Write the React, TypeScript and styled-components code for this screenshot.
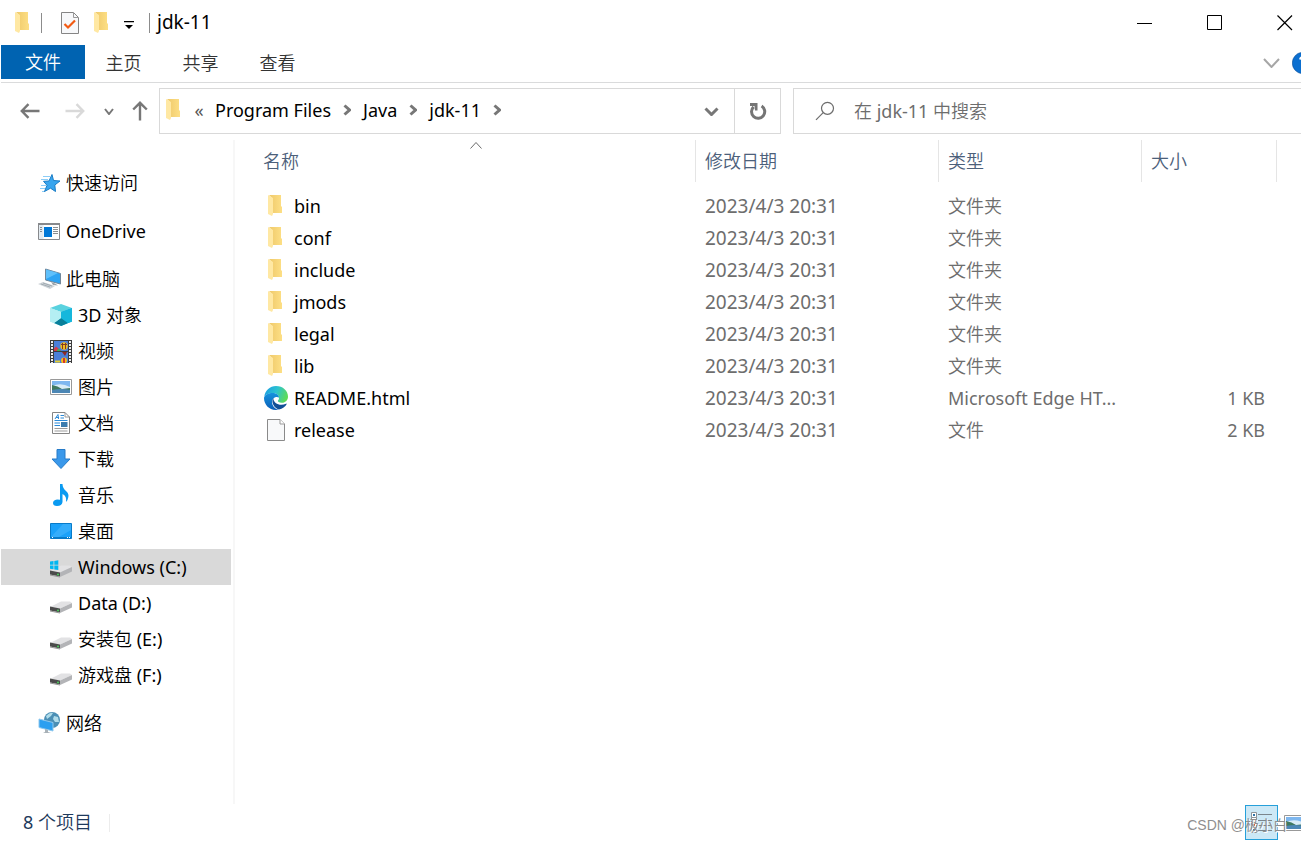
import React from "react";
import styled, { createGlobalStyle, css } from "styled-components";

const GlobalStyle = createGlobalStyle`
  * { box-sizing: border-box; }
  html, body { margin: 0; height: 100%; overflow: hidden; background: #fff; }
  #root { height: 100%; }
  body, button, input {
    font-family: "Noto Sans", "Noto Sans CJK SC DemiLight", "Noto Sans CJK SC", sans-serif;
    font-size: 18px;
    font-weight: 400;
    line-height: 24px;
    color: #000;
  }
  button { border: 0; padding: 0; background: none; cursor: default; }
  svg { display: block; flex: none; }
`;

const Window = styled.div`
  position: relative;
  display: flex;
  flex-direction: column;
  height: 100vh;
  padding-left: 1px;
  overflow: hidden;
`;

const TitleBar = styled.header`
  display: flex;
  align-items: center;
  height: 45px;
  flex: none;
`;

const QuickTools = styled.div`
  display: flex;
  align-items: center;
  padding-left: 14px;
`;

const ToolButton = styled.button<{ $width: number }>`
  display: flex;
  align-items: center;
  width: ${(p) => p.$width}px;
  height: 24px;
`;

const ToolRule = styled.span<{ $gap: number }>`
  width: 1px;
  height: 20px;
  margin-right: ${(p) => p.$gap}px;
  background: #8c8c8c;
`;

const Title = styled.h1`
  margin: 0;
  padding-bottom: 2px;
  font-size: 19px;
  font-weight: inherit;
  line-height: 24px;
`;

const WindowButtons = styled.div`
  display: flex;
  margin-left: auto;
`;

const WindowButton = styled.button<{ $edge?: boolean }>`
  display: flex;
  align-items: center;
  height: 45px;
  width: ${(p) => (p.$edge ? 52 : 70)}px;
  padding-left: 28px;
`;

const Ribbon = styled.nav`
  display: flex;
  align-items: center;
  height: 38px;
  flex: none;
  padding-bottom: 3px;
  border-bottom: 1px solid #dadbdc;
`;

const RibbonTab = styled.button<{ $primary?: boolean }>`
  height: 34px;
  width: ${(p) => (p.$primary ? 84 : 77)}px;
  padding-top: ${(p) => (p.$primary ? 0 : 2)}px;
  color: ${(p) => (p.$primary ? "#fff" : "#333")};
  background: ${(p) => (p.$primary ? "#0063b1" : "none")};
`;

const RibbonTools = styled.div`
  display: flex;
  align-items: center;
  gap: 12px;
  width: 38px;
  padding-top: 2px;
  margin-left: auto;
  overflow: hidden;
`;

const NavigationBar = styled.div`
  display: flex;
  height: 57px;
  flex: none;
  padding: 5px 0 6px;
`;

const HistoryButtons = styled.div`
  display: flex;
  align-items: center;
  width: 158px;
  padding-left: 18px;
`;

const AddressBox = styled.div`
  display: flex;
  flex: 620 1 0;
  min-width: 0;
  border: 1px solid #d9d9d9;
`;

const Crumbs = styled.ol`
  display: flex;
  flex: 1;
  align-items: center;
  margin: 0;
  padding: 0 0 2px 6px;
  list-style: none;
  white-space: nowrap;
`;

const Crumb = styled.li`
  display: flex;
  align-items: center;
  margin-right: 12px;
  gap: 12px;
`;

const Overflow = styled.button`
  width: 20px;
  margin: 0 6px 0 7px;
  color: #555;
  line-height: 20px;
`;

const AddressButton = styled.button<{ $divided?: boolean }>`
  display: flex;
  align-items: center;
  justify-content: center;
  width: 46px;
  ${(p) => p.$divided && css`border-left: 1px solid #d9d9d9;`}
`;

const SearchBox = styled.label`
  display: flex;
  align-items: center;
  flex: 486 1 0;
  min-width: 0;
  margin-left: 12px;
  padding-left: 21px;
  gap: 19px;
  border: 1px solid #d9d9d9;
  border-right: 0;
`;

const SearchInput = styled.input`
  flex: 1;
  min-width: 0;
  padding: 0;
  border: 0;
  outline: 0;
  &::placeholder { color: #6d6d6d; opacity: 1; }
`;

const Content = styled.div`
  display: flex;
  flex: 1;
  min-height: 0;
`;

const Sidebar = styled.nav`
  width: 234px;
  flex: none;
  padding: 25px 2px 0 0;
  border-right: 2px solid #f7f7f7;
`;

const TreeGroup = styled.ul`
  margin: 0 0 12px;
  padding: 0;
  list-style: none;
`;

const TreeItem = styled.a<{ $child?: boolean; $selected?: boolean }>`
  display: flex;
  align-items: center;
  gap: ${(p) => (p.$child ? 6 : 4)}px;
  height: 36px;
  padding-left: ${(p) => (p.$child ? 49 : 37)}px;
  color: #000;
  text-decoration: none;
  white-space: nowrap;
  background: ${(p) => (p.$selected ? "#d9d9d9" : "none")};
`;

const FilePane = styled.main`
  flex: 1;
  min-width: 0;
  padding-right: 24px;
`;

const FileTable = styled.table`
  width: 100%;
  table-layout: fixed;
  border-collapse: separate;
  border-spacing: 0;
`;

const Column = styled.col<{ $width?: number }>`
  width: ${(p) => (p.$width ? p.$width + "px" : "auto")};
`;

const HeadCell = styled.th<{ $name?: boolean }>`
  position: relative;
  height: 42px;
  padding: 0 0 0 ${(p) => (p.$name ? 28 : 9)}px;
  border-right: 1px solid #e5e5e5;
  color: #4c607a;
  font-weight: inherit;
  text-align: left;
`;

const SortMark = styled.span`
  position: absolute;
  top: 2px;
  left: 51%;
`;

const Body = styled.tbody`
  &::before { content: ""; display: block; height: 8px; }
`;

const Cell = styled.td<{ $end?: boolean }>`
  height: 32px;
  padding: 0 ${(p) => (p.$end ? 12 : 0)}px 0 9px;
  color: #6d6d6d;
  text-align: ${(p) => (p.$end ? "right" : "left")};
  white-space: nowrap;
  overflow: hidden;
`;

const DateCell = styled(Cell)`
  font-size: 19px;
`;

const NameCell = styled(Cell)`
  padding-left: 29px;
  color: #000;
`;

const FileName = styled.span`
  display: flex;
  align-items: center;
  gap: 6px;
`;

const IconSlot = styled.span<{ $width: number }>`
  display: flex;
  justify-content: center;
  width: ${(p) => p.$width}px;
  flex: none;
`;

const StatusBar = styled.footer`
  display: flex;
  align-items: center;
  height: 37px;
  flex: none;
  padding-left: 22px;
  color: #1e395b;
`;

const ItemCount = styled.span`
  padding-bottom: 2px;
`;

const StatusRule = styled.span`
  width: 1px;
  height: 18px;
  margin-left: 17px;
  background: #ececec;
`;

const ViewButtons = styled.div`
  display: flex;
  align-items: center;
  gap: 6px;
  width: 56px;
  margin-left: auto;
  overflow: hidden;
`;

const ViewButton = styled.button<{ $active?: boolean }>`
  display: flex;
  align-items: center;
  justify-content: center;
  flex: none;
  ${(p) => p.$active && css`
    width: 33px;
    height: 35px;
    border: 1px solid #26a0da;
    background: #cce8f6;
  `}
`;

const Credit = styled.span`
  position: absolute;
  right: 14px;
  bottom: 6px;
  color: #8f8f8f;
  font-family: "Liberation Sans", "Noto Sans CJK SC", sans-serif;
  font-size: 14px;
  line-height: 20px;
  text-shadow: 1px 1px 0 #fff;
  pointer-events: none;
`;

const Folder = () => (
  <svg width="16" height="22" viewBox="0 0 16 22">
    <defs>
      <linearGradient id="folderBack" x1="0" y1="0" x2="1" y2="0">
        <stop offset="0" stopColor="#efc96a" />
        <stop offset="1" stopColor="#fddf85" />
      </linearGradient>
    </defs>
    <path d="M1 0H13V11L14 12V18H4V3Z" fill="url(#folderBack)" />
    <path d="M0 0L5 3V19L4 21L0 19Z" fill="#ffe8a3" />
  </svg>
);

const Checked = () => (
  <svg width="18" height="22" viewBox="0 0 18 22">
    <path d="M.5.5H12.5L17.5 5.5V21.5H.5Z" fill="#f7f8fa" stroke="#858585" />
    <path d="M12.5 1V5.5H17" fill="none" stroke="#999" />
    <path d="M3.500 12L7 15.500L14 8.500" fill="none" stroke="#f25a12" strokeWidth="2.2" />
  </svg>
);

const Caret = () => (
  <svg width="10" height="12" viewBox="0 0 10 12">
    <path d="M0 4H10V5.300H0ZM1 8H9L5 12Z" fill="#000" />
  </svg>
);

const Chevron = ({ dir = "down", width = 10, height = 6, color = "#6b6b6b", stroke = 2 }: {
  dir?: "down" | "up" | "right"; width?: number; height?: number; color?: string; stroke?: number;
}) => {
  const m = stroke / 2;
  const d =
    dir === "down" ? `M${m} ${m}L${width / 2} ${height - m}L${width - m} ${m}`
    : dir === "up" ? `M${m} ${height - m}L${width / 2} ${m}L${width - m} ${height - m}`
    : `M${m} ${m}L${width - m} ${height / 2}L${m} ${height - m}`;
  return (
    <svg width={width} height={height} viewBox={`0 0 ${width} ${height}`}>
      <path d={d} fill="none" stroke={color} strokeWidth={stroke} />
    </svg>
  );
};

const Arrow = ({ turn, color }: { turn: number; color: string }) => (
  <svg width="22" height="20" viewBox="0 0 22 20">
    <g transform={`rotate(${turn} 11 10)`} fill="none" stroke={color} strokeWidth="2.4">
      <path d="M2.5 10H20.500M9.500 3.200L2.800 10L9.500 16.800" />
    </g>
  </svg>
);

const Refresh = () => (
  <svg width="18" height="18" viewBox="0 0 18 18">
    <path d="M12.600 4A6.600 6.600 0 1 1 4.600 4.800" fill="none" stroke="#757575" strokeWidth="3" />
    <path d="M1 1H8.500V8.500H6L5.500 4H1Z" fill="#757575" />
  </svg>
);

const Magnifier = () => (
  <svg width="20" height="20" viewBox="0 0 20 20">
    <circle cx="12.5" cy="7.3" r="6" fill="none" stroke="#6d6d6d" strokeWidth="1.2" />
    <path d="M8.2 11.6L1 18.8" stroke="#6d6d6d" strokeWidth="1.2" />
  </svg>
);

const Help = () => (
  <svg width="22" height="22" viewBox="0 0 22 22">
    <circle cx="11" cy="11" r="10.7" fill="#0b6fd0" stroke="#0a4f9a" strokeWidth=".6" />
    <path d="M8 7.5Q8.5 5 11 5Q14 5 14 8Q14 10 11 12V14M11 16V18" fill="none" stroke="#fff" strokeWidth="2" />
  </svg>
);

const Star = () => (
  <svg width="24" height="22" viewBox="0 0 24 22">
    <path d="M5 4.500H12M3 7.500H10M3 13.500H8M2 16.500H7M4 19.500H7" stroke="#8ccdf7" />
    <path d="M14 2.500L15.500 8.500L22 9L16.800 13L17.500 19.500L12.500 16.200L6.500 19.500L9 13.300L5.500 9.300L11 9Z" fill="#38a5ee" stroke="#1b7dc6" />
  </svg>
);

const Drive = ({ system }: { system?: boolean }) => (
  <svg width="22" height="22" viewBox="0 0 22 22">
    <path d="M0 15L11 9.500H20L22 11L10 16.500Z" fill="#e2e2e4" />
    <path d="M10 16.500L22 11V15.500L10 21Z" fill="#b3b4b7" />
    <path d="M0 14.500L10 16.500V20.500L0 18.500Z" fill="#4b4b4b" />
    <path d="M0 18.500L10 20.500V21.500L0 19.500Z" fill="#969696" />
    <circle cx="8" cy="18.500" r="1" fill="#4bd15d" />
    {system && <path d="M0 5.500L3.500 5V8.700H0ZM4.300 4.900L8.300 4.300V8.700H4.300ZM0 9.500H3.500V13.200L0 12.700ZM4.300 9.500H8.300V14L4.300 13.400Z" fill="#00b7f1" />}
  </svg>
);

const OneDrive = () => (
  <svg width="24" height="17" viewBox="1 0 24 17">
    <path d="M1.500.5H22.500V16.500H1.500Z" fill="#fff" stroke="#87898c" />
    <path d="M1 0H23V2H1Z" fill="#87898c" />
    <path d="M2 2H6.500V16H2Z" fill="#e3ebf1" />
    <path d="M7 4H15V14H7Z" fill="#0078d7" />
    <path d="M3 4.500H5M3 6.500H5M3 8.500H5M16 4.500H21M16 6.500H21M16 8.500H21M16 10.500H21" stroke="#8b8f92" />
  </svg>
);

const Computer = () => (
  <svg width="24" height="22" viewBox="0 0 24 22">
    <path d="M7.5 1L22.500 5.500V16L7.500 12Z" fill="#2fa4f3" stroke="#71879a" />
    <path d="M8 1.600L20 5L8 11Z" fill="#5fc0fb" />
    <path d="M13 14L17 15.500L20 17.500L15 17Z" fill="#9ba4ab" />
    <path d="M0 16L5 14L17 18L12 21Z" fill="#cdd3d8" />
    <path d="M3 16L12 19M5 15L14 18" stroke="#98a2aa" strokeWidth=".8" />
  </svg>
);

const Cube = () => (
  <svg width="22" height="22" viewBox="0 0 22 22">
    <path d="M0 4L11 0L22 4L11 8Z" fill="#5ad2df" />
    <path d="M0 4L11 8V22L0 17.500Z" fill="#a5ebf0" />
    <path d="M22 4L11 8V22L22 17.500Z" fill="#06a8d3" />
    <path d="M11 14L18 19L11 22L4 19Z" fill="#087f9a" />
    <path d="M0 4L11 8V14L4 19L0 17.500Z" fill="#b4eff3" />
    <path d="M22 4L11 8V14L18 19L22 17.500Z" fill="#16b7dc" />
  </svg>
);

const Video = () => (
  <svg width="22" height="23" viewBox="0 0 22 23">
    <path d="M0 0H22V23H0Z" fill="#3c3c3c" />
    <path d="M4 1H18V11H4ZM4 12H18V23H4Z" fill="#4b7fd8" />
    <path d="M2 1V23M20 1V23" stroke="#eee" strokeWidth="2" strokeDasharray="2 1" />
    <path d="M4 8.500L6 6.500L9 9L11 11H4Z" fill="#d63b4a" />
    <path d="M7 10L9 8.500L11 11H7Z" fill="#3fae59" />
    <circle cx="14" cy="6" r="3.700" fill="#f2bd1d" />
    <path d="M11 4.500H17M12.500 3V9M15.500 3V9" stroke="#833b22" />
    <path d="M12 12H17L15 16Z" fill="#8f2a26" />
    <circle cx="14" cy="20.500" r="3" fill="#f2bd1d" />
    <path d="M5 21.500H10" stroke="#e5cf36" strokeWidth="2" />
    <path d="M14 18V23" stroke="#d3382f" strokeWidth="2" />
  </svg>
);

const Picture = () => (
  <svg width="22" height="16" viewBox="0 0 22 16">
    <path d="M.5.5H21.500V15.500H.5Z" fill="#fff" stroke="#999" />
    <path d="M2 2H20V14H2Z" fill="#7eb7ef" />
    <path d="M2 7Q11 3 20 8V10H2Z" fill="#d9ecf7" />
    <path d="M2 6Q8 7 12 10L20 9V11H2Z" fill="#3f7961" />
    <path d="M2 11Q12 9 20 11V14H2Z" fill="#4c87b5" />
  </svg>
);

const Document = () => (
  <svg width="18" height="22" viewBox="0 0 18 22">
    <path d="M.5.5H13L17.500 5V21.500H.5Z" fill="#fff" stroke="#858585" />
    <path d="M13 .5V5H17.500" fill="none" stroke="#999" />
    <path d="M3 7L6 2.500L6.500 7M4 5.500H7M8.500 3.500H12M8.500 6H12M2.500 8.500H15.500M2.500 11H8M2.500 13.500H8" fill="none" stroke="#2b8ad8" />
    <path d="M9 10H15.500V15H9Z" fill="#3c7cae" />
    <path d="M2.500 16.500H15.500M2.500 19H15.500" stroke="#9b9b9b" />
  </svg>
);

const Download = () => (
  <svg width="20" height="20" viewBox="0 0 20 20">
    <path d="M6 .5H14V10H19L10 19.500L1 10H6Z" fill="#3a98ea" stroke="#267bc8" />
  </svg>
);

const Music = () => (
  <svg width="18" height="22" viewBox="0 0 18 22">
    <path d="M8 0H10.500Q10.500 4 14 7Q18 10 15.500 16L14 18Q15 12 10.500 10V18Q10 22 5 22Q1 22 1 19Q1 16 5 15.500L8 15.700Z" fill="#0a9af1" />
  </svg>
);

const Desktop = () => (
  <svg width="22" height="16" viewBox="0 0 22 16">
    <path d="M.5.5H21.500V15.500H.5Z" fill="#1ba1f9" stroke="#087bc9" />
    <path d="M13 1H21V7L9 14H1Z" fill="#35adfb" />
    <path d="M1 14H21V15.500H1Z" fill="#087bc9" />
    <path d="M2 14.500H3M17 14.500H18M19 14.500H20" stroke="#fff" />
  </svg>
);

const Network = () => (
  <svg width="24" height="22" viewBox="0 0 24 22">
    <circle cx="14" cy="8" r="8" fill="#4b8fb5" />
    <path d="M8 4Q12 0 15 1L13 4L9 7ZM16 4L20 5L21 10L17 10L15 7Z" fill="#b0dcea" />
    <path d="M1 7L15 10.500V19L1 15.500Z" fill="#2b9ff0" stroke="#8fc8ee" />
    <path d="M7 17L10 18V20L13 21H5L7 20Z" fill="#a9b2b8" />
  </svg>
);

const Edge = () => (
  <svg width="24" height="24" viewBox="0 0 24 24">
    <defs>
      <linearGradient id="edgeTop" x1="0" y1=".2" x2="1" y2=".5">
        <stop offset="0" stopColor="#1b9de2" />
        <stop offset=".5" stopColor="#2cc3d0" />
        <stop offset="1" stopColor="#5fdb55" />
      </linearGradient>
      <linearGradient id="edgeSide" x1="0" y1="0" x2="0" y2="1">
        <stop offset="0" stopColor="#1692dd" />
        <stop offset="1" stopColor="#0b5fb8" />
      </linearGradient>
    </defs>
    <path d="M.3 10.500C1.200 4.300 6 0 12 0C19 0 24 5 24 10.500C24 14.500 21 16.800 17.700 16.800C15 16.800 13.700 15.700 13.900 14.800C14.200 14.200 15 13.500 15 12C15 9 12 7 8.700 7C4.500 7 1.300 9 .3 10.500Z" fill="url(#edgeTop)" />
    <path d="M0 12C.3 9 4 7 8.700 7C12 7 15 9 15 11.500C11.500 9.800 8 12.500 8 16C8 20 11.500 23.500 15 23.500C6.500 25.500 0 19.500 0 12Z" fill="url(#edgeSide)" />
    <path d="M9.200 12C7 15.500 9.500 22 15 23.500C18.500 22.800 21.300 20.500 22.600 18.200C22.800 17.700 22.400 17.500 22 17.700C16 20.500 9.500 17.500 9.200 12Z" fill="#124f96" />
  </svg>
);

const Page = () => (
  <svg width="18" height="22" viewBox="0 0 18 22">
    <path d="M.5.5H13L17.500 5V21.500H.5Z" fill="#f8f9fa" stroke="#8a8a8a" />
    <path d="M13 .5V5H17.500" fill="#fff" stroke="#999" />
  </svg>
);

const DetailsView = () => (
  <svg width="22" height="21" viewBox="0 0 22 21">
    <path d="M.5.5H5.500V5.500H.5ZM.5 5.500H5.500V10.500H.5ZM.5 10.500H5.500V15.500H.5ZM.5 15.500H5.500V20.500H.5Z" fill="#fff" stroke="#8e9498" />
    <path d="M2 3H4M2 8H4M2 18H4" stroke="#2f75a8" strokeWidth="2" />
    <path d="M2 13H4" stroke="#b0423a" strokeWidth="2" />
    <path d="M7 2.500H21M7 8.500H21M7 13.500H21M7 18.500H21" stroke="#7b858c" />
  </svg>
);

type Place = { label: string; icon: React.ReactNode; child?: boolean; selected?: boolean };

const places: Place[][] = [
  [{ label: "快速访问", icon: <Star /> }],
  [{ label: "OneDrive", icon: <OneDrive /> }],
  [
    { label: "此电脑", icon: <Computer /> },
    { label: "3D 对象", icon: <Cube />, child: true },
    { label: "视频", icon: <Video />, child: true },
    { label: "图片", icon: <Picture />, child: true },
    { label: "文档", icon: <Document />, child: true },
    { label: "下载", icon: <Download />, child: true },
    { label: "音乐", icon: <Music />, child: true },
    { label: "桌面", icon: <Desktop />, child: true },
    { label: "Windows (C:)", icon: <Drive system />, child: true, selected: true },
    { label: "Data (D:)", icon: <Drive />, child: true },
    { label: "安装包 (E:)", icon: <Drive />, child: true },
    { label: "游戏盘 (F:)", icon: <Drive />, child: true },
  ],
  [{ label: "网络", icon: <Network /> }],
];

const files = [
  ...["bin", "conf", "include", "jmods", "legal", "lib"].map((name) => ({
    name, type: "文件夹", size: "", icon: <Folder />,
  })),
  { name: "README.html", type: "Microsoft Edge HT...", size: "1 KB", icon: <Edge /> },
  { name: "release", type: "文件", size: "2 KB", icon: <Page /> },
];

export default function App() {
  return (
    <Window>
      <GlobalStyle />
      <TitleBar>
        <QuickTools>
          <ToolButton $width={26} aria-label="窗口菜单"><Folder /></ToolButton>
          <ToolRule $gap={19} />
          <ToolButton $width={33} aria-label="属性"><Checked /></ToolButton>
          <ToolButton $width={30} aria-label="新建文件夹"><Folder /></ToolButton>
          <ToolButton $width={25} aria-label="自定义快速访问工具栏"><Caret /></ToolButton>
          <ToolRule $gap={7} />
        </QuickTools>
        <Title>jdk-11</Title>
        <WindowButtons>
          <WindowButton aria-label="最小化">
            <svg width="16" height="16" viewBox="0 0 16 16"><path d="M0 8.500H15" stroke="#000" /></svg>
          </WindowButton>
          <WindowButton aria-label="最大化">
            <svg width="16" height="16" viewBox="0 0 16 16"><path d="M.5.5H14.500V14.500H.5Z" fill="none" stroke="#000" /></svg>
          </WindowButton>
          <WindowButton $edge aria-label="关闭">
            <svg width="16" height="16" viewBox="0 0 16 16"><path d="M.5.5L15 15M15 .5L.5 15" stroke="#000" strokeWidth="1.2" /></svg>
          </WindowButton>
        </WindowButtons>
      </TitleBar>

      <Ribbon>
        <RibbonTab $primary>文件</RibbonTab>
        <RibbonTab>主页</RibbonTab>
        <RibbonTab>共享</RibbonTab>
        <RibbonTab>查看</RibbonTab>
        <RibbonTools>
          <button aria-label="展开功能区"><Chevron width={17} height={10} color="#a6a6a6" /></button>
          <button aria-label="帮助"><Help /></button>
        </RibbonTools>
      </Ribbon>

      <NavigationBar>
        <HistoryButtons>
          <ToolButton $width={45} aria-label="后退"><Arrow turn={0} color="#777" /></ToolButton>
          <ToolButton $width={40} aria-label="前进"><Arrow turn={180} color="#d9d9d9" /></ToolButton>
          <ToolButton $width={25} aria-label="最近浏览的位置"><Chevron width={10} height={7} stroke={2} color="#777" /></ToolButton>
          <ToolButton $width={22} aria-label="向上"><Arrow turn={90} color="#777" /></ToolButton>
        </HistoryButtons>
        <AddressBox>
          <Crumbs>
            <Folder />
            <Overflow aria-label="上级位置">«</Overflow>
            {["Program Files", "Java", "jdk-11"].map((crumb) => (
              <Crumb key={crumb}>{crumb}<Chevron dir="right" width={8} height={12} stroke={3} color="#777" /></Crumb>
            ))}
          </Crumbs>
          <AddressButton aria-label="以前的位置"><Chevron width={15} height={9} stroke={3} color="#777" /></AddressButton>
          <AddressButton $divided aria-label="刷新"><Refresh /></AddressButton>
        </AddressBox>
        <SearchBox>
          <Magnifier />
          <SearchInput type="text" aria-label="搜索" placeholder="在 jdk-11 中搜索" />
        </SearchBox>
      </NavigationBar>

      <Content>
        <Sidebar>
          {places.map((group) => (
            <TreeGroup key={group[0].label}>
              {group.map((p) => (
                <li key={p.label}>
                  <TreeItem href="#" $child={p.child} $selected={p.selected}>
                    <IconSlot $width={p.child ? 22 : 24}>{p.icon}</IconSlot>
                    {p.label}
                  </TreeItem>
                </li>
              ))}
            </TreeGroup>
          ))}
        </Sidebar>
        <FilePane>
          <FileTable>
            <colgroup>
              <Column />
              <Column $width={243} />
              <Column $width={203} />
              <Column $width={135} />
            </colgroup>
            <thead>
              <tr>
                <HeadCell $name>名称<SortMark><Chevron dir="up" width={12} height={7} stroke={1} /></SortMark></HeadCell>
                <HeadCell>修改日期</HeadCell>
                <HeadCell>类型</HeadCell>
                <HeadCell>大小</HeadCell>
              </tr>
            </thead>
            <Body>
              {files.map((f) => (
                <tr key={f.name}>
                  <NameCell><FileName><IconSlot $width={24}>{f.icon}</IconSlot>{f.name}</FileName></NameCell>
                  <DateCell>2023/4/3 20:31</DateCell>
                  <Cell>{f.type}</Cell>
                  <Cell $end>{f.size}</Cell>
                </tr>
              ))}
            </Body>
          </FileTable>
        </FilePane>
      </Content>

      <StatusBar>
        <ItemCount>8 个项目</ItemCount>
        <StatusRule />
        <ViewButtons>
          <ViewButton $active aria-label="详细信息"><DetailsView /></ViewButton>
          <ViewButton aria-label="大缩略图"><Picture /></ViewButton>
        </ViewButtons>
      </StatusBar>
      <Credit>CSDN @极小白</Credit>
    </Window>
  );
}
